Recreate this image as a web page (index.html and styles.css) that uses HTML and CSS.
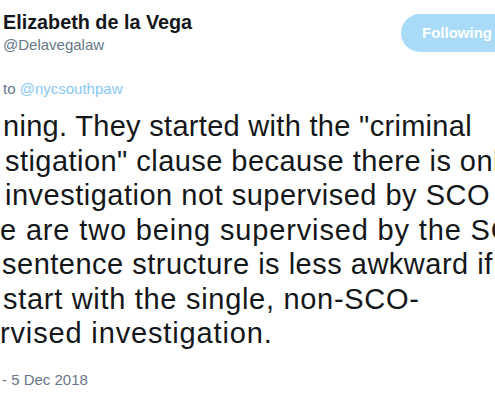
FILE: index.html
```html
<!DOCTYPE html>
<html lang="en">
<head>
<meta charset="utf-8">
<title>Tweet</title>
<link rel="stylesheet" href="styles.css">
</head>
<body>
<div class="tweet">
  <div class="header">
    <div class="author">
      <div class="name">Elizabeth de la Vega</div>
      <div class="handle">@Delavegalaw</div>
    </div>
    <button class="follow">Following</button>
  </div>
  <div class="reply">to <span class="link">@nycsouthpaw</span></div>
  <div class="text">
    <div class="line l1">ning. They started with the "criminal</div>
    <div class="line l2">stigation" clause because there is only</div>
    <div class="line l3">investigation not supervised by SCO and</div>
    <div class="line l4">e are two being supervised by the SCO.</div>
    <div class="line l5">sentence structure is less awkward if</div>
    <div class="line l6">start with the single, non-SCO-</div>
    <div class="line l7">rvised investigation.</div>
  </div>
  <div class="date">- 5 Dec 2018</div>
</div>
</body>
</html>
```
FILE: styles.css
```css
html, body {
  margin: 0;
  padding: 0;
  overflow: hidden;
  background: #ffffff;
}
body {
  width: 495px;
  height: 400px;
  font-family: "Liberation Sans", Arial, sans-serif;
  color: #14171a;
}
.tweet {
  padding: 10px 0 0 3px;
}
.header {
  display: flex;
  justify-content: space-between;
  align-items: flex-start;
}
.name {
  font-size: 19.8px;
  font-weight: bold;
  line-height: 24px;
  white-space: nowrap;
}
.handle {
  margin-top: 1px;
  font-size: 15px;
  line-height: 20px;
  color: #657786;
}
.follow {
  margin-top: 4px;
  margin-right: -18px;
  height: 38px;
  padding: 0 21px;
  border: none;
  border-radius: 19px;
  background: #a9dbf9;
  color: #ffffff;
  font-family: "Liberation Sans", Arial, sans-serif;
  font-size: 15px;
  font-weight: bold;
  line-height: 38px;
  white-space: nowrap;
}
.reply {
  margin-top: 24px;
  font-size: 15px;
  line-height: 20px;
  color: #657786;
}
.link {
  color: #88c9f5;
}
.text {
  margin-top: 10px;
  font-size: 29px;
  line-height: 34.5px;
  letter-spacing: 0.75px;
  white-space: nowrap;
}
.line.l1 { text-indent: 0; letter-spacing: 0.3px; }
.line.l2 { text-indent: 2px; letter-spacing: 0.45px; }
.line.l3 { text-indent: 2px; letter-spacing: 0.5px; }
.line.l4 { text-indent: -3px; letter-spacing: 0.85px; }
.line.l5 { text-indent: -1px; letter-spacing: 0.5px; }
.line.l6 { text-indent: 0; letter-spacing: 0.7px; }
.line.l7 { text-indent: -3px; letter-spacing: 0.85px; }
.date {
  margin-top: 19px;
  margin-left: -1px;
  font-size: 15px;
  line-height: 20px;
  color: #657786;
}
```
